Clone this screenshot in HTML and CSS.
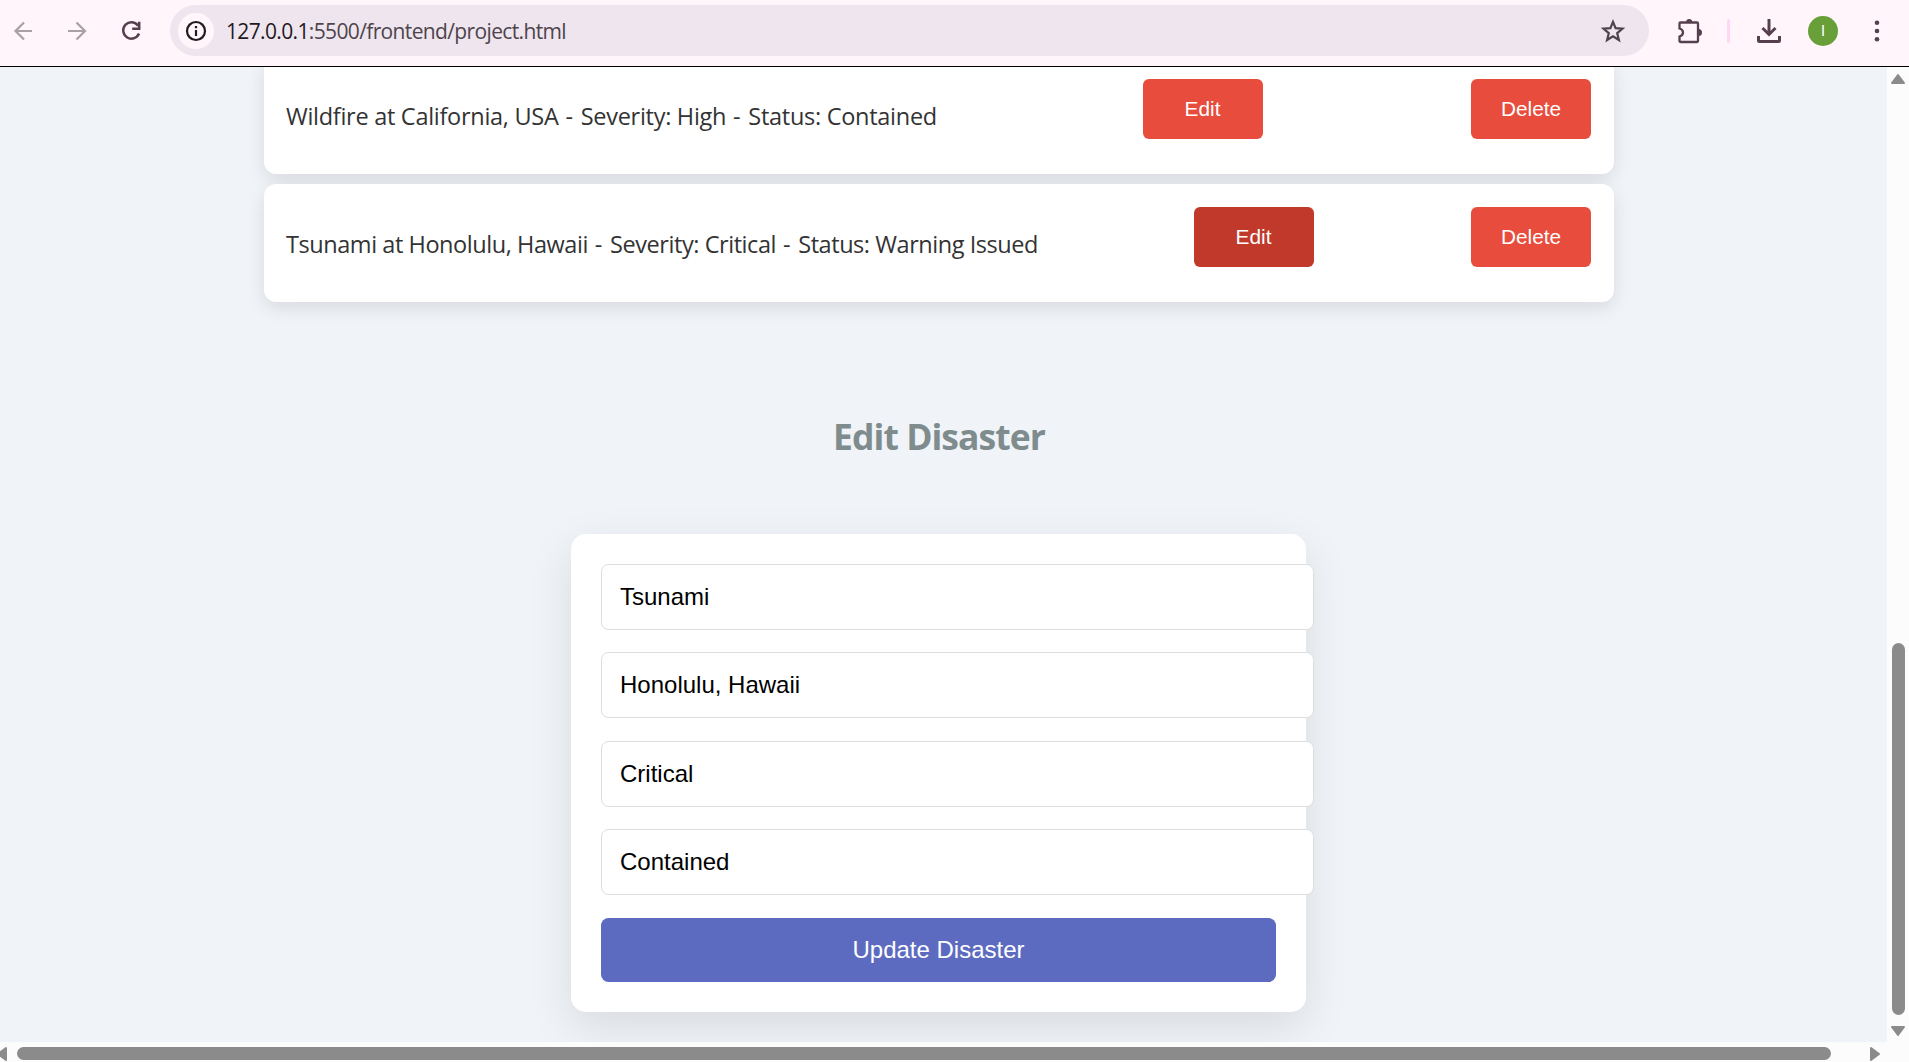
FILE: index.html
```html
<!DOCTYPE html>
<html lang="en">
<head>
<meta charset="utf-8">
<title>Disaster Management</title>
<link rel="stylesheet" href="styles.css">
</head>
<body>
<div class="browser">
  <header class="toolbar">
    <svg class="nav-icons" width="170" height="62" viewBox="0 0 170 62" fill="none" stroke-width="2.2">
      <g stroke="#a8a0a5"><path d="M32 31H16M24 22.5L15.5 31L24 39.500"/><path d="M68 31H84M76.500 22.500L85 31L76.500 39.500"/></g>
      <g stroke="#56404f" stroke-width="2.500"><path d="M138.200 25.800A8.200 8.200 0 1 0 139 33.500"/><path d="M139.200 21.800V28.800H132.200"/></g>
    </svg>
    <div class="address">
      <span class="info">
        <svg width="24" height="24" viewBox="0 0 24 24" fill="none" stroke="#1f1a1e" stroke-width="2.200"><circle cx="12" cy="12" r="9"/><path d="M12 11V17M12 7V9.200"/></svg>
      </span>
      <span class="url"><span class="host">127.0.0.1</span>:5500/frontend/project.html</span>
      <svg class="star" width="26" height="26" viewBox="0 0 26 26" fill="none" stroke="#4a454b" stroke-width="2.200"><path d="M13 3.800L15.600 10.200L22.500 10.700L17.200 15.200L18.900 22L13 18.300L7.100 22L8.800 15.200L3.500 10.700L10.400 10.200Z"/></svg>
    </div>
    <div class="tools">
      <svg width="28" height="28" viewBox="0 0 28 28"><path d="M5.500 5.500H22Q23 5.500 23 6.500V24Q23 25 22 25H5.500Q4.500 25 4.500 24V19.500Q8 18.500 8 15.500T4.500 11.500V6.500Q4.500 5.500 5.500 5.500Z" fill="none" stroke="#56404f" stroke-width="2.300"/><path d="M11 5.500A3.200 3.500 0 0 1 17.400 5.500ZM23.500 12A3.500 3.500 0 0 1 23.500 19Z" fill="#56404f"/></svg>
      <span class="divider"></span>
      <svg class="download" width="26" height="26" viewBox="0 0 26 26" fill="none" stroke="#56404f" stroke-width="3"><path d="M13 1V15M6.500 10L13 16.500L19.500 10M2.500 18V22.500Q2.500 23.500 3.500 23.500H22.500Q23.500 23.500 23.500 22.500V18"/></svg>
      <span class="avatar">I</span>
      <svg class="menu" width="6" height="24" viewBox="0 0 6 24" fill="#56404f"><circle cx="3" cy="3.800" r="2.300"/><circle cx="3" cy="12" r="2.300"/><circle cx="3" cy="20.200" r="2.300"/></svg>
    </div>
  </header>
  <main class="page">
    <ul class="list">
      <li class="item"><span class="label wildfire">Wildfire at California, USA<span class="sep"> - </span>Severity: High<span class="sep"> - </span>Status: Contained</span><button class="btn">Edit</button><button class="btn">Delete</button></li>
      <li class="item"><span class="label tsunami">Tsunami at Honolulu, Hawaii<span class="sep"> - </span>Severity: Critical<span class="sep"> - </span>Status: Warning Issued</span><button class="btn active">Edit</button><button class="btn">Delete</button></li>
    </ul>
    <h2 class="title">Edit Disaster</h2>
    <form class="form">
      <input type="text" value="Tsunami">
      <input type="text" value="Honolulu, Hawaii">
      <input type="text" value="Critical">
      <input type="text" value="Contained">
      <button type="button" class="submit">Update Disaster</button>
    </form>
  </main>
  <div class="vbar">
    <svg width="16" height="12" viewBox="0 0 16 12"><path d="M8 2L14 10H2Z"/></svg>
    <span class="vthumb"></span>
    <svg width="16" height="12" viewBox="0 0 16 12"><path d="M8 10L14 2H2Z"/></svg>
  </div>
  <div class="hbar">
    <svg width="8" height="16" viewBox="0 0 8 16"><path d="M-2 8L6 2V14Z"/></svg>
    <span class="hthumb"></span>
    <svg width="12" height="16" viewBox="0 0 12 16"><path d="M10 8L2 2V14Z"/></svg>
  </div>
</div>
</body>
</html>
```
FILE: styles.css
```css
* { box-sizing: border-box; }
body { margin: 0; overflow: hidden; }
svg { display: block; flex: none; }

.browser {
  width: 1909px;
  height: 1062px;
  display: grid;
  grid-template-columns: 1887px 22px;
  grid-template-rows: 67px 975px 20px;
  background: #fcfcfc;
}

.toolbar {
  grid-column: 1 / -1;
  display: flex;
  background: #fff5fa;
  border-bottom: 1px solid #000;
}
.address {
  width: 1479px;
  height: 51px;
  margin-top: 5px;
  padding: 0 23px 0 8px;
  display: flex;
  align-items: center;
  border-radius: 26px;
  background: #efe5ee;
}
.info {
  width: 36px;
  height: 36px;
  border-radius: 50%;
  background: #fff5fa;
  display: flex;
  align-items: center;
  justify-content: center;
}
.url {
  margin-left: 12px;
  font: 21px/30px "Open Sans", sans-serif;
  letter-spacing: -0.64px;
  color: #4d444c;
  white-space: nowrap;
}
.host { color: #1f1a1e; }
.star { margin-left: auto; }
.tools {
  height: 62px;
  padding-left: 26px;
  display: flex;
  align-items: center;
}
.divider { width: 3px; height: 24px; margin-left: 24px; border-radius: 2px; background: #ffd6f5; }
.download { margin-left: 26px; }
.avatar {
  width: 30px;
  height: 30px;
  margin-left: 26px;
  border-radius: 50%;
  background: #689f38;
  color: #fff;
  font: 15px/30px Roboto, sans-serif;
  text-align: center;
}
.menu { margin-left: 36px; }

.page {
  overflow: hidden;
  background: #f0f3f8;
  font-family: "Open Sans", sans-serif;
}
.list {
  width: 1350px;
  margin: -10.5px 0 0 264px;
  padding: 0;
  list-style: none;
  display: flex;
  flex-direction: column;
  gap: 10px;
}
.item {
  height: 117.5px;
  padding: 22.5px 23px 22.5px 22px;
  display: flex;
  justify-content: space-between;
  align-items: flex-start;
  border-radius: 12px;
  background: #fff;
  box-shadow: 0 6px 18px rgba(0, 0, 0, .1);
}
.label {
  padding-top: 20px;
  font-size: 23.5px;
  line-height: 34px;
  color: #333;
  white-space: nowrap;
}
.wildfire { width: 648px; letter-spacing: -0.28px; }
.tsunami { width: 750px; letter-spacing: -0.44px; }
.sep { letter-spacing: 0.8px; }
.btn {
  width: 120px;
  height: 60px;
  padding: 0;
  border: 0;
  border-radius: 6px;
  background: #e74c3c;
  color: #fff;
  font: 20.8px "Liberation Sans", Arial, sans-serif;
}
.active { background: #c0392b; }
.title {
  width: 1350px;
  margin: 110.5px 0 0 264px;
  font-size: 35.5px;
  line-height: 48px;
  letter-spacing: -0.95px;
  font-weight: 700;
  text-align: center;
  color: #7f8c8d;
}
.form {
  width: 735px;
  height: 478px;
  margin: 74px 0 0 571px;
  padding: 30px;
  display: flex;
  flex-direction: column;
  align-items: flex-start;
  gap: 22.4px;
  border-radius: 15px;
  background: #fff;
  box-shadow: 0 15px 45px rgba(0, 0, 0, .1);
}
.form input {
  width: 713px;
  height: 66px;
  flex: none;
  padding: 0 18px;
  border: 1px solid #ddd;
  border-radius: 7.5px;
  background: #fff;
  color: #000;
  font: 24px "Liberation Sans", Arial, sans-serif;
}
.submit {
  width: 675px;
  height: 64px;
  border: 0;
  border-radius: 7.5px;
  background: #5c6bc0;
  color: #fff;
  font: 24px "Liberation Sans", Arial, sans-serif;
}

.vbar, .hbar {
  display: flex;
  align-items: center;
  fill: #8b8b8b;
  stroke: #8b8b8b;
  stroke-width: 2;
  stroke-linejoin: round;
}
.vbar { flex-direction: column; padding: 6px 0 5px; }
.vthumb { width: 13px; height: 372px; margin: auto 0 10px; border-radius: 7px; background: #8b8b8b; }
.hbar { grid-column: 1 / -1; padding-top: 3px; }
.hbar svg:last-child { margin-left: 38px; }
.hthumb { width: 1814px; height: 13px; margin-left: 9px; border-radius: 7px; background: #8b8b8b; }
```
